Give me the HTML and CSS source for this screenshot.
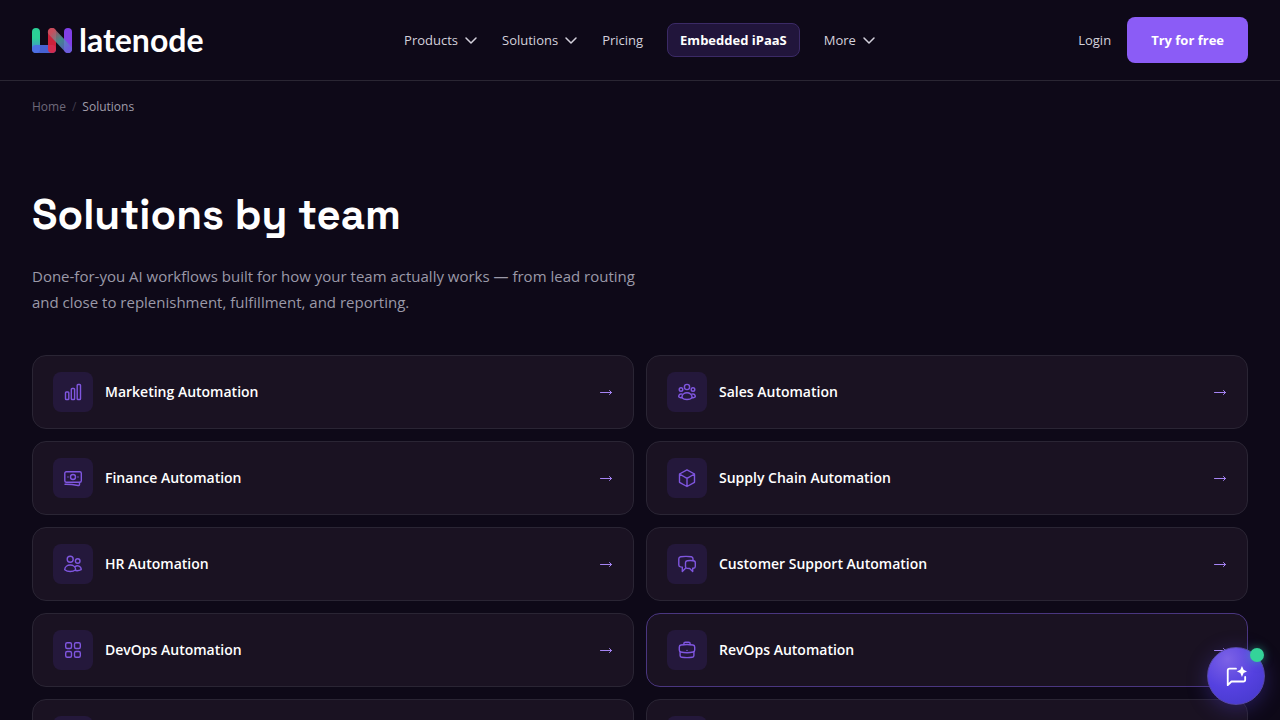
FILE: index.html
```html
<!DOCTYPE html>
<html lang="en">
<head>
    <meta charset="UTF-8">
    <meta name="viewport" content="width=device-width, initial-scale=1.0">
    <title>Solutions by team | Latenode</title>
    <link rel="stylesheet" href="styles.css">
</head>
<body>
    <header class="header">
        <a href="#" class="logo">
            <svg class="logo-mark" viewBox="0 0 40 25">
                <defs>
                    <linearGradient id="logoGreen" x1="0" y1="0" x2="0" y2="1">
                        <stop offset="0.4" stop-color="#2bcf96"/>
                        <stop offset="1" stop-color="#4b7fe0"/>
                    </linearGradient>
                    <linearGradient id="logoTeal" x1="0" y1="0" x2="1" y2="1">
                        <stop offset="0" stop-color="#c65663"/>
                        <stop offset="0.5" stop-color="#4a9fa0"/>
                        <stop offset="1" stop-color="#6a62dc"/>
                    </linearGradient>
                </defs>
                <rect x="0" y="0" width="8" height="25" rx="4" fill="url(#logoGreen)"/>
                <rect x="0" y="17" width="24" height="8" rx="4" fill="#4c6be6" fill-opacity="0.9"/>
                <rect x="16" y="0" width="8" height="25" rx="4" fill="#e0263f" fill-opacity="0.9"/>
                <rect x="32" y="0" width="8" height="25" rx="4" fill="#8040e8"/>
                <path d="M20 4l16 17" stroke="url(#logoTeal)" stroke-width="8" stroke-opacity="0.85"/>
            </svg>
            <span class="logo-text">latenode</span>
        </a>

        <nav class="nav">
            <button class="nav-item">Products
                <svg class="chevron" viewBox="0 0 14 14"><path d="M2 5l5 5 5-5"/></svg>
            </button>
            <button class="nav-item">Solutions
                <svg class="chevron" viewBox="0 0 14 14"><path d="M2 5l5 5 5-5"/></svg>
            </button>
            <a href="#" class="nav-item">Pricing</a>
            <a href="#" class="nav-item nav-pill">Embedded iPaaS</a>
            <button class="nav-item">More
                <svg class="chevron" viewBox="0 0 14 14"><path d="M2 5l5 5 5-5"/></svg>
            </button>
        </nav>

        <div class="actions">
            <a href="#" class="nav-item">Login</a>
            <a href="#" class="try-btn">Try for free</a>
        </div>
    </header>

    <main class="content">
        <nav class="breadcrumbs" aria-label="Breadcrumb">
            <a href="#">Home</a>
            <span class="separator">/</span>
            <span class="current">Solutions</span>
        </nav>

        <h1>Solutions by team</h1>
        <p class="lead">Done-for-you AI workflows built for how your team actually works — from lead routing and close to replenishment, fulfillment, and reporting.</p>

        <div class="cards">
            <a href="#" class="card">
                <span class="card-icon">
                    <svg viewBox="0 0 20 20">
                        <rect x="2.5" y="10" width="3.3" height="7.5" rx="0.8"/>
                        <rect x="8.3" y="6.5" width="3.3" height="11" rx="0.8"/>
                        <rect x="14.2" y="2.5" width="3.3" height="15" rx="0.8"/>
                    </svg>
                </span>
                <span class="card-title">Marketing Automation</span>
                <svg class="arrow" viewBox="0 0 14 14"><path d="M1.5 7.5h11M10.5 5.5l2 2-2 2"/></svg>
            </a>
            <a href="#" class="card">
                <span class="card-icon">
                    <svg viewBox="0 0 20 20">
                        <circle cx="10" cy="5" r="2.6"/>
                        <circle cx="4" cy="7.5" r="1.8"/>
                        <circle cx="16" cy="7.5" r="1.8"/>
                        <path d="M4.9 15.5c0-6.3 10.2-6.3 10.2 0-1.5 2.7-8.7 2.7-10.200 0z"/>
                        <path d="M5.2 12.200c-2-.8-3.500.4-3.500 2.600 1 1 2.200 1 3.200.7M14.800 12.200c2-.8 3.500.4 3.500 2.600-1 1-2.200 1-3.200.7"/>
                    </svg>
                </span>
                <span class="card-title">Sales Automation</span>
                <svg class="arrow" viewBox="0 0 14 14"><path d="M1.5 7.5h11M10.5 5.5l2 2-2 2"/></svg>
            </a>
            <a href="#" class="card">
                <span class="card-icon">
                    <svg viewBox="0 0 20 20">
                        <rect x="1.8" y="3.8" width="16.5" height="10.5" rx="1.5"/>
                        <circle cx="10" cy="9" r="2.5"/>
                        <path d="M5 9h.01M15 9h.01M2 16.2c4.5-.1 8.800.4 13 1.300.8.2 1.500-.3 1.500-1.100v-1.900"/>
                    </svg>
                </span>
                <span class="card-title">Finance Automation</span>
                <svg class="arrow" viewBox="0 0 14 14"><path d="M1.5 7.5h11M10.5 5.5l2 2-2 2"/></svg>
            </a>
            <a href="#" class="card">
                <span class="card-icon">
                    <svg viewBox="0 0 20 20">
                        <path d="M10 1.800l7.500 4.200v8.300L10 18.500l-7.500-4.200V6zM2.500 6l7.500 4.300L17.500 6M10 10.300v8.200"/>
                    </svg>
                </span>
                <span class="card-title">Supply Chain Automation</span>
                <svg class="arrow" viewBox="0 0 14 14"><path d="M1.5 7.5h11M10.5 5.5l2 2-2 2"/></svg>
            </a>
            <a href="#" class="card">
                <span class="card-icon">
                    <svg viewBox="0 0 20 20">
                        <circle cx="7.2" cy="5.3" r="3"/>
                        <circle cx="14.700" cy="7" r="2.3"/>
                        <path d="M1.700 15.800c.2-6.400 10.800-6.400 11 0-3 2.300-8 2.300-11 0zM12.700 16.600c1.900.3 3.800 0 5.500-.9.100-3.600-3.900-5-6.200-2.900"/>
                    </svg>
                </span>
                <span class="card-title">HR Automation</span>
                <svg class="arrow" viewBox="0 0 14 14"><path d="M1.5 7.5h11M10.5 5.5l2 2-2 2"/></svg>
            </a>
            <a href="#" class="card">
                <span class="card-icon">
                    <svg viewBox="0 0 20 20">
                        <path d="M16 6.500V4.800c0-1-.6-1.800-1.600-2-3.600-.6-7.200-.6-10.800 0-1 .2-1.800 1-1.800 2v6.100c0 1 .8 1.800 1.800 2l1.700.2v4.400l3.200-3.300"/>
                        <path d="M10.300 6.700c2-.2 4-.2 6 0 1.200.1 2 .9 2 2v3.500c0 1.100-.8 1.900-1.800 2l-.8.100v3.200l-3-3c-.8 0-1.600 0-2.400-.1-1-.1-1.800-.9-1.800-2V8.700c0-1.100.8-1.900 1.800-2z"/>
                    </svg>
                </span>
                <span class="card-title">Customer Support Automation</span>
                <svg class="arrow" viewBox="0 0 14 14"><path d="M1.5 7.5h11M10.5 5.5l2 2-2 2"/></svg>
            </a>
            <a href="#" class="card">
                <span class="card-icon">
                    <svg viewBox="0 0 20 20">
                        <rect x="2.700" y="2.700" width="5.800" height="5.800" rx="1.500"/>
                        <rect x="11.500" y="2.700" width="5.800" height="5.800" rx="1.500"/>
                        <rect x="2.700" y="11.500" width="5.800" height="5.800" rx="1.500"/>
                        <rect x="11.500" y="11.500" width="5.800" height="5.800" rx="1.500"/>
                    </svg>
                </span>
                <span class="card-title">DevOps Automation</span>
                <svg class="arrow" viewBox="0 0 14 14"><path d="M1.5 7.5h11M10.5 5.5l2 2-2 2"/></svg>
            </a>
            <a href="#" class="card active">
                <span class="card-icon">
                    <svg viewBox="0 0 20 20">
                        <path d="M4 5c4-.6 8-.6 12 0 1 .2 1.700 1 1.700 1.900v3.200c0 .9-.6 1.700-1.500 1.900-4.100 1-8.300 1-12.400 0-.9-.2-1.500-1-1.500-1.900V6.900C2.300 6 3 5.200 4 5z"/>
                        <path d="M3.100 11.800v3.700c0 .9.700 1.700 1.600 1.800 3.500.4 7.100.4 10.600 0 .9-.1 1.600-.9 1.600-1.800v-3.700M6.800 4.600V3.900c0-.9.700-1.600 1.600-1.600h3.200c.9 0 1.600.7 1.600 1.600v.7M10 10.500h.01"/>
                    </svg>
                </span>
                <span class="card-title">RevOps Automation</span>
                <svg class="arrow" viewBox="0 0 14 14"><path d="M1.5 7.5h11M10.5 5.5l2 2-2 2"/></svg>
            </a>
            <a href="#" class="card" aria-label="More solutions"><span class="card-icon"></span></a>
            <a href="#" class="card" aria-label="More solutions"><span class="card-icon"></span></a>
        </div>
    </main>

    <button class="chat-btn" aria-label="Open chat">
        <svg viewBox="0 0 24 24">
            <path d="M12 4H5a2 2 0 0 0-2 2v16l4-4h13a2 2 0 0 0 2-2v-3"/>
            <path class="spark" d="M18.500 1l1.800 4.200L24 7l-3.700 1.800-1.800 4.200-1.800-4.200L13 7l3.700-1.800z"/>
        </svg>
        <span class="status-dot"></span>
    </button>
</body>
</html>
```
FILE: styles.css
```css
* {
    box-sizing: border-box;
}

html {
    scrollbar-width: none;
}

body {
    margin: 0;
    background-color: #0e0918;
    color: #fff;
    font-family: "Segoe UI", "Open Sans", "Noto Sans", sans-serif;
}

a {
    color: inherit;
    text-decoration: none;
}

button {
    padding: 0;
    border: none;
    background: none;
    font-family: inherit;
    cursor: pointer;
}

svg {
    fill: none;
    stroke: currentColor;
    stroke-linecap: round;
    stroke-linejoin: round;
}

.header {
    display: grid;
    grid-template-columns: 1fr auto 1fr;
    align-items: center;
    padding: 17px 32px;
    border-bottom: 1px solid #2a2633;
}

.logo {
    display: flex;
    align-items: center;
    gap: 7px;
}

.logo-mark {
    width: 40px;
    height: 25px;
    stroke: none;
}

.logo-text {
    font-family: Lato, sans-serif;
    font-size: 32px;
    font-weight: 700;
    line-height: 40px;
}

.nav {
    display: flex;
    align-items: center;
    gap: 24px;
}

.nav-item {
    display: flex;
    align-items: center;
    gap: 6px;
    color: #d4d1dc;
    font-size: 13px;
    font-weight: 500;
    line-height: 20px;
}

.chevron {
    width: 14px;
    height: 14px;
    stroke-width: 1.5;
}

.nav-pill {
    padding: 6px 12px;
    border: 1px solid #3b2a66;
    border-radius: 8px;
    background-color: #21153b;
    color: #fff;
    font-weight: 700;
}

.actions {
    display: flex;
    align-items: center;
    justify-content: flex-end;
    gap: 16px;
}

.try-btn {
    padding: 13px 24px;
    border-radius: 8px;
    background-color: #8b5cf6;
    font-size: 13px;
    font-weight: 700;
    line-height: 20px;
}

.content {
    padding: 16px 32px;
}

.breadcrumbs {
    display: flex;
    gap: 6px;
    color: #6d6878;
    font-size: 12px;
    line-height: 20px;
}

.separator {
    color: #403b4b;
}

.current {
    color: #a09daa;
}

h1 {
    margin: 72px 0 0;
    font-family: "Space Grotesk", Inter, sans-serif;
    font-size: 42px;
    font-weight: 700;
    line-height: 52px;
}

.lead {
    max-width: 624px;
    margin: 22px 0 40px;
    color: #9b99a8;
    font-size: 15px;
    line-height: 26px;
}

.cards {
    display: grid;
    grid-template-columns: 1fr 1fr;
    gap: 12px;
}

.card {
    display: flex;
    align-items: center;
    gap: 12px;
    padding: 16px 20px;
    border: 1px solid #2a2534;
    border-radius: 14px;
    background-color: #1a1222;
}

.card.active {
    border-color: #4a3680;
}

.card-icon {
    display: flex;
    align-items: center;
    justify-content: center;
    width: 40px;
    height: 40px;
    border-radius: 8px;
    background-color: #24183b;
    color: #7f56df;
}

.card-icon svg {
    width: 20px;
    height: 20px;
    stroke-width: 1.4;
}

.card-title {
    flex: 1;
    font-size: 14px;
    font-weight: 600;
    line-height: 24px;
}

.arrow {
    width: 14px;
    height: 14px;
    color: #a684f5;
}

.chat-btn {
    position: fixed;
    right: 15px;
    bottom: 15px;
    display: flex;
    align-items: center;
    justify-content: center;
    width: 58px;
    height: 58px;
    border: 1px solid #5647a8;
    border-radius: 50%;
    background: radial-gradient(circle at 35% 20%, #7c62e6, #5541e0 50%, #4438c8);
    box-shadow: 0 4px 20px rgba(85, 65, 216, 0.35);
    color: #fff;
}

.chat-btn svg {
    width: 22px;
    height: 22px;
    stroke-width: 2;
}

.chat-btn .spark {
    fill: currentColor;
    stroke: none;
}

.status-dot {
    position: absolute;
    top: 0;
    right: 0;
    width: 14px;
    height: 14px;
    border-radius: 50%;
    background-color: #34d399;
    box-shadow: 0 0 10px rgba(52, 211, 153, 0.5);
}
```
